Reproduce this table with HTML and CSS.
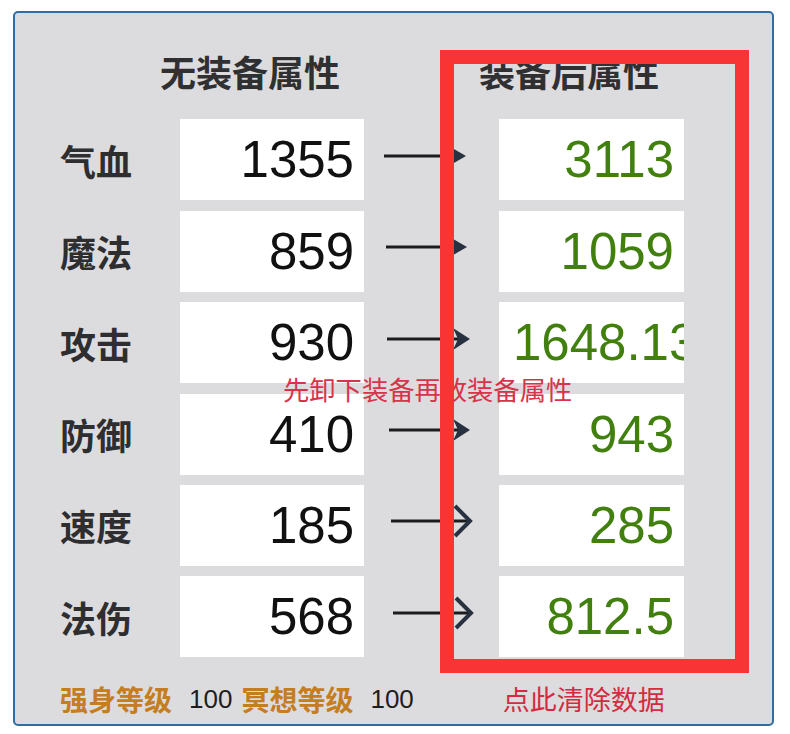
FILE: index.html
```html
<!DOCTYPE html>
<html lang="zh-CN">
<head>
<meta charset="utf-8">
<title>属性对比</title>
<link rel="stylesheet" href="styles.css">
</head>
<body>
<div class="panel">
  <div class="grid">
    <div></div>
    <div class="head">无装备属性</div>
    <div></div>
    <div class="head">装备后属性</div>

    <div class="label">气血</div>
    <div class="box">1355</div>
    <div class="arrow a1"><svg width="100" height="36" viewBox="0 0 100 36"><line x1="0" y1="18" x2="72" y2="18" class="shaft"/><path d="M69 10.5 L82 18 L69 25.5 Z" class="tip"/></svg></div>
    <div class="box green">3113</div>

    <div class="label">魔法</div>
    <div class="box">859</div>
    <div class="arrow a2"><svg width="100" height="36" viewBox="0 0 100 36"><line x1="0" y1="18" x2="72" y2="18" class="shaft"/><path d="M68 10.5 L81 18 L68 25.5 Z" class="tip"/></svg></div>
    <div class="box green">1059</div>

    <div class="label">攻击</div>
    <div class="box">930</div>
    <div class="arrow a3"><svg width="100" height="36" viewBox="0 0 100 36"><line x1="0" y1="18" x2="74" y2="18" class="shaft"/><path d="M66 7 L83 18 L66 29 L71 18 Z" class="tip"/></svg></div>
    <div class="box green">1648.13</div>

    <div class="label">防御</div>
    <div class="box">410</div>
    <div class="arrow a4"><svg width="100" height="36" viewBox="0 0 100 36"><line x1="0" y1="18" x2="72" y2="18" class="shaft"/><path d="M64 7 L81 18 L64 29 L69 18 Z" class="tip"/></svg></div>
    <div class="box green">943</div>

    <div class="label">速度</div>
    <div class="box">185</div>
    <div class="arrow a5"><svg width="100" height="36" viewBox="0 0 100 36"><line x1="0" y1="18" x2="78" y2="18" class="shaft"/><polyline points="64,3 79,18 64,33" class="chev"/></svg></div>
    <div class="box green">285</div>

    <div class="label">法伤</div>
    <div class="box">568</div>
    <div class="arrow a6"><svg width="100" height="36" viewBox="0 0 100 36"><line x1="0" y1="18" x2="77" y2="18" class="shaft"/><polyline points="63,3 78,18 63,33" class="chev"/></svg></div>
    <div class="box green">812.5</div>
  </div>

  <div class="footer">
    <span class="lv">强身等级</span>
    <span class="num">100</span>
    <span class="lv">冥想等级</span>
    <span class="num">100</span>
    <span class="clear">点此清除数据</span>
  </div>

  <div class="hint">先卸下装备再放装备属性</div>
  <div class="frame"></div>
</div>
</body>
</html>
```

FILE: styles.css
```css
* { box-sizing: border-box; }
html, body { margin: 0; padding: 0; background: #ffffff; }
body {
  width: 790px;
  height: 734px;
  overflow: hidden;
  font-family: "Noto Sans CJK SC", "Noto Sans", sans-serif;
}
.panel {
  position: relative;
  margin: 11px 0 0 13px;
  width: 761px;
  height: 715px;
  border: 2px solid #2f6ea5;
  border-radius: 5px;
  background: #dcdcde;
  padding: 40px 0 0 45px;
}
.grid {
  display: grid;
  grid-template-columns: 120px 184px 135px 185px;
  grid-template-rows: 56px repeat(6, 81px);
  row-gap: 10.4px;
}
.head {
  align-self: start;
  justify-self: start;
  margin-left: -20px;
  font-size: 36px;
  line-height: 36px;
  font-weight: 700;
  color: #303033;
  white-space: nowrap;
}
.label {
  align-self: center;
  font-size: 36px;
  line-height: 40px;
  font-weight: 700;
  color: #2e2e30;
}
.box {
  background: #ffffff;
  text-align: right;
  padding: 0 10px 0 14px;
  overflow: hidden;
  white-space: nowrap;
  font-family: "Liberation Sans", Arial, sans-serif;
  font-size: 51px;
  line-height: 81px;
  color: #111111;
}
.box.green { color: #417f0e; }
.arrow {
  align-self: center;
  margin-top: -8px;
  height: 36px;
}
.arrow svg { display: block; }
.shaft { stroke: #1c1c1e; stroke-width: 3; }
.tip { fill: #283140; }
.chev { fill: none; stroke: #283140; stroke-width: 4; stroke-linejoin: miter; }
.a1 { margin-left: 20px; }
.a2 { margin-left: 22px; }
.a3 { margin-left: 23px; }
.a4 { margin-left: 25px; }
.a5 { margin-left: 27px; }
.a6 { margin-left: 29px; }
.footer {
  display: flex;
  align-items: center;
  margin-top: 26px;
  height: 32px;
  white-space: nowrap;
}
.lv {
  font-size: 28px;
  line-height: 32px;
  font-weight: 700;
  color: #c47d1f;
}
.num {
  font-family: "Liberation Sans", Arial, sans-serif;
  font-size: 26px;
  color: #1e1e1e;
  margin: 0 9px 0 17px;
}
.clear {
  margin-left: 80px;
  font-size: 27px;
  line-height: 32px;
  color: #d42b3f;
}
.hint {
  position: absolute;
  left: 268px;
  top: 361px;
  font-size: 26.3px;
  line-height: 30px;
  color: #d8334a;
  white-space: nowrap;
}
.frame {
  position: absolute;
  left: 425px;
  top: 37px;
  width: 309px;
  height: 623px;
  border: 14px solid #f83434;
}
```
